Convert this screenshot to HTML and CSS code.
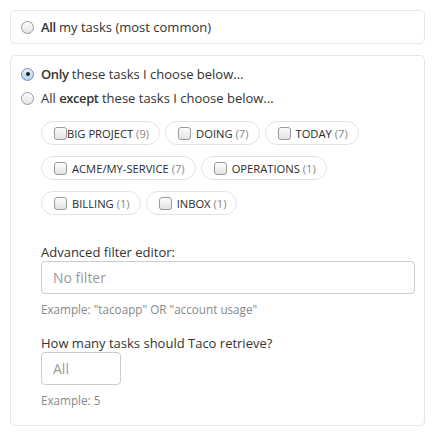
FILE: index.html
```html
<!DOCTYPE html>
<html>
<head>
<meta charset="utf-8">
<link rel="stylesheet" href="styles.css">
</head>
<body>
<div class="page">
  <div class="box box-single">
    <label class="opt"><span class="radio"></span><span><b>All</b> my tasks (most common)</span></label>
  </div>
  <div class="box box-main">
    <label class="opt"><span class="radio checked"></span><span><b>Only</b> these tasks I choose below...</span></label>
    <label class="opt"><span class="radio"></span><span>All <b>except</b> these tasks I choose below...</span></label>
    <div class="indent">
      <div class="chips">
        <span class="chip tight"><span class="cb"></span>BIG PROJECT <span class="count">(9)</span></span>
        <span class="chip"><span class="cb"></span>DOING <span class="count">(7)</span></span>
        <span class="chip"><span class="cb"></span>TODAY <span class="count">(7)</span></span>
        <span class="chip"><span class="cb"></span>ACME/MY-SERVICE <span class="count">(7)</span></span>
        <span class="chip"><span class="cb"></span>OPERATIONS <span class="count">(1)</span></span>
        <span class="chip"><span class="cb"></span>BILLING <span class="count">(1)</span></span>
        <span class="chip"><span class="cb"></span>INBOX <span class="count">(1)</span></span>
      </div>
      <div class="field first">
        <div class="label">Advanced filter editor:</div>
        <div class="input wide">No filter</div>
        <div class="help">Example: "tacoapp" OR "account usage"</div>
      </div>
      <div class="field">
        <div class="label">How many tasks should Taco retrieve?</div>
        <div class="input small">All</div>
        <div class="help">Example: 5</div>
      </div>
    </div>
  </div>
</div>
</body>
</html>
```
FILE: styles.css
```css
* { box-sizing: border-box; }
html, body { margin: 0; padding: 0; background: #fff; }
body {
  font-family: "Open Sans", "Noto Sans", sans-serif;
  font-size: 13px;
  color: #333;
}
.page { padding: 10px 10px 0 10px; display: flex; flex-direction: column; gap: 11px; }
.box {
  border: 1px solid #e6e6e6;
  border-radius: 5px;
  background: #fff;
}
.box-single { height: 34px; display: flex; align-items: center; padding: 0 10px; }
.box-main { padding: 6px 10px 16px 10px; }
.opt {
  display: flex;
  align-items: center;
  height: 24px;
  gap: 7px;
}
.opt b { font-weight: 600; letter-spacing: -0.4px; }
.radio {
  width: 13px; height: 13px;
  border-radius: 50%;
  border: 1px solid #9a9a9a;
  background: linear-gradient(#fdfdfd, #e4e4e4);
  display: inline-block;
  position: relative;
  flex: none;
}
.radio.checked {
  border-color: #6c8fc0;
  background: linear-gradient(#e4eefb, #b9cfee);
}
.radio.checked::after {
  content: "";
  position: absolute;
  width: 4px; height: 4px;
  border-radius: 50%;
  background: #222;
  left: 3.5px; top: 3.5px;
}
.indent { padding-left: 20px; }
.chips {
  margin-top: 11px;
  display: flex;
  flex-wrap: wrap;
  column-gap: 5px;
  row-gap: 11px;
  width: 325px;
}
.chip {
  height: 24px;
  border: 1px solid #e3e3e3;
  border-radius: 12px;
  display: inline-flex;
  align-items: center;
  padding: 0 10px 0 12px;
  font-size: 11.2px;
  color: #2b2b2b;
  white-space: pre;
}
.chip .count { color: #888; }
.cb {
  width: 13px; height: 13px;
  border: 1px solid #9a9a9a;
  border-radius: 3px;
  background: linear-gradient(#fdfdfd, #e2e2e2);
  margin-right: 5px;
  flex: none;
}
.chip.tight .cb { margin-right: 0; }
.field.first { margin-top: 29px; }
.field { margin-top: 17px; }
.label { line-height: 17px; font-size: 13px; color: #333; }
.input {
  height: 33px;
  border: 1px solid #ccc;
  border-radius: 4px;
  padding: 0 11px;
  display: flex;
  align-items: center;
  font-size: 14px;
  color: #999;
}
.input.wide { width: 374px; }
.input.small { width: 80px; }
.help { margin-top: 6px; line-height: 18px; font-size: 11.7px; color: #888; }
```
